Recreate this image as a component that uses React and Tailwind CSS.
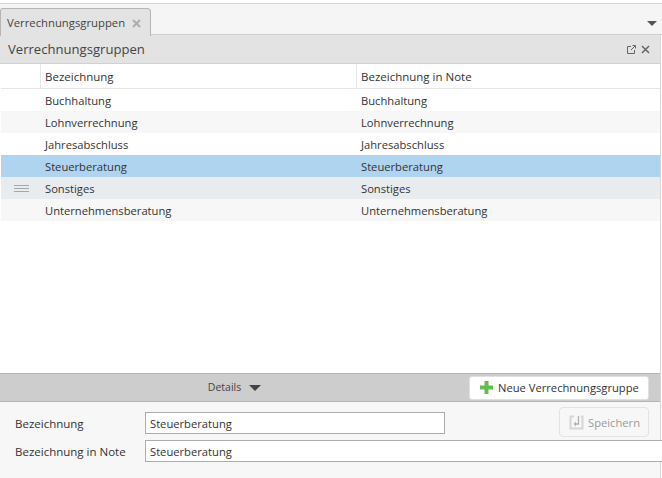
import React from "react";

const FONT = "font-['Open_Sans','Noto_Sans',sans-serif]";

const ROWS = [
  { name: "Buchhaltung", cls: "bg-white" },
  { name: "Lohnverrechnung", cls: "bg-[#f7f7f7]" },
  { name: "Jahresabschluss", cls: "bg-white" },
  { name: "Steuerberatung", cls: "bg-[#aed4f0]" },
  { name: "Sonstiges", cls: "bg-[#e9ecef]", hover: true },
  { name: "Unternehmensberatung", cls: "bg-[#f7f7f7]" },
];

function Row({ name, cls, hover }) {
  return (
    <div className={`flex h-[22px] items-center ml-px ${cls}`}>
      <div className="w-[39px] flex justify-center">
        {hover && (
          <div className="w-[15px] h-[7px] ml-[1px] flex flex-col justify-between">
            <div className="h-px bg-[#a5a8aa]" />
            <div className="h-px bg-[#a5a8aa]" />
            <div className="h-px bg-[#a5a8aa]" />
          </div>
        )}
      </div>
      <div className="w-[316px] pl-[5px] pt-[2px]">{name}</div>
      <div className="pl-[5px] pt-[2px]">{name}</div>
    </div>
  );
}

function Field({ label, value, inputCls }) {
  return (
    <div className="flex items-center h-[22px]">
      <div className="w-[145px] pl-[15px] pt-[1px] shrink-0 whitespace-nowrap text-[11.5px]">{label}</div>
      <div className={`h-[22px] border border-[#acacac] bg-white pl-1 pt-[1px] flex items-center shrink-0 ${inputCls}`}>{value}</div>
    </div>
  );
}

export default function App() {
  return (
    <div className={`${FONT} w-[662px] h-[478px] overflow-hidden bg-white text-[11.2px] leading-none text-[#333] flex flex-col`}>
      <div className="h-[4px] border-b border-[#d4d4d4] shrink-0" />

      {/* Tab strip */}
      <div className="h-[31px] shrink-0 bg-[#f5f5f5] flex items-end justify-between relative">
        <div className="w-[151px] h-[28px] bg-[#e3e3e3] border border-b-0 border-[#b5b5b5] rounded-tr-[4px] rounded-tl-[3px] flex items-center pl-[6px] gap-[7px] mb-[-1px] z-10">
          <span className="text-[#444] text-[11.3px]">Verrechnungsgruppen</span>
          <svg width="9" height="9" viewBox="0 0 9 9" className="mt-px">
            <path d="M1 1l7 7M8 1L1 8" stroke="#adadad" strokeWidth="2" />
          </svg>
        </div>
        <div className="w-0 h-0 border-x-[5px] border-x-transparent border-t-[5px] border-t-[#555] mr-[5px] mb-[9px]" />
        <div className="absolute left-0 right-0 bottom-0 h-px bg-[#cfcfcf]" />
      </div>

      {/* Panel */}
      <div className="flex-1 w-[661px] flex flex-col border-r border-[#d8d8d8] min-h-0">
        <div className="h-[29px] shrink-0 bg-[#e3e3e3] border-b border-[#d0d0d0] flex items-center justify-between pl-[8px] pr-[10px]">
          <span className="text-[13.1px] text-[#444] pt-[1px]">Verrechnungsgruppen</span>
          <div className="flex items-center gap-[5px]">
            <svg width="9" height="9" viewBox="0 0 9 9" fill="none" stroke="#666">
              <path d="M4 1.5H.5v7h7V5M4 5l4-4M5.5.5h3v3" />
            </svg>
            <svg width="9" height="9" viewBox="0 0 9 9">
              <path d="M1 1l7 7M8 1L1 8" stroke="#666" strokeWidth="1.5" />
            </svg>
          </div>
        </div>

        {/* Grid */}
        <div className="flex-1 min-h-0">
          <div className="flex h-[25px] items-center border-b border-[#e6e6e6] ml-px text-[11.5px]">
            <div className="w-[39px] h-full" />
            <div className="w-[316px] h-full pl-[4px] pt-[2px] border-l border-[#e6e6e6] flex items-center">Bezeichnung</div>
            <div className="h-full pl-[4px] pt-[2px] border-l border-[#e6e6e6] flex items-center">Bezeichnung in Note</div>
          </div>
          {ROWS.map((r) => (
            <Row key={r.name} {...r} />
          ))}
        </div>

        {/* Details bar */}
        <div className="h-[29px] shrink-0 bg-[#cdcdcd] border-y border-[#b4b4b4] flex items-center relative">
          <div className="w-[467px] flex items-center justify-center gap-[8px] pl-[2px]">
            <span className="text-[#444] text-[10.5px]">Details</span>
            <div className="w-0 h-0 border-x-[6px] border-x-transparent border-t-[6px] border-t-[#444]" />
          </div>
          <button className="ml-[2px] h-[24px] w-[180px] bg-white rounded-[3px] border border-[#e0e0e0] flex items-center pl-[9px] gap-[4px] whitespace-nowrap">
            <svg width="15" height="15" viewBox="0 0 15 15">
              <path d="M7.5 1v13M1 7.5h13" stroke="#66bb55" strokeWidth="4" />
            </svg>
            <span className="pt-[1px]">Neue Verrechnungsgruppe</span>
          </button>
        </div>

        {/* Form */}
        <div className="h-[76px] shrink-0 bg-[#f7f7f7] pt-[10px] flex flex-col gap-[6px] relative">
          <Field label="Bezeichnung" value="Steuerberatung" inputCls="w-[300px]" />
          <Field label="Bezeichnung in Note" value="Steuerberatung" inputCls="w-[530px] border-r-0" />
          <button className="absolute left-[559px] top-[5px] w-[90px] h-[30px] rounded-[4px] border border-[#e3e3e3] flex items-center pl-[9px] gap-[4px] text-[#9a9a9a]">
            <svg width="15" height="15" viewBox="0 0 15 15" fill="none">
              <path d="M5 1.5H1.5v12h12v-12H12" stroke="#d6d6d6" strokeWidth="2" />
              <path d="M9.5 1v8H6" stroke="#b0b0b0" strokeWidth="1.3" />
              <path d="M7 6.5L4.5 9 7 11.5z" fill="#b0b0b0" />
            </svg>
            <span className="pt-[1px]">Speichern</span>
          </button>
        </div>
      </div>
    </div>
  );
}
